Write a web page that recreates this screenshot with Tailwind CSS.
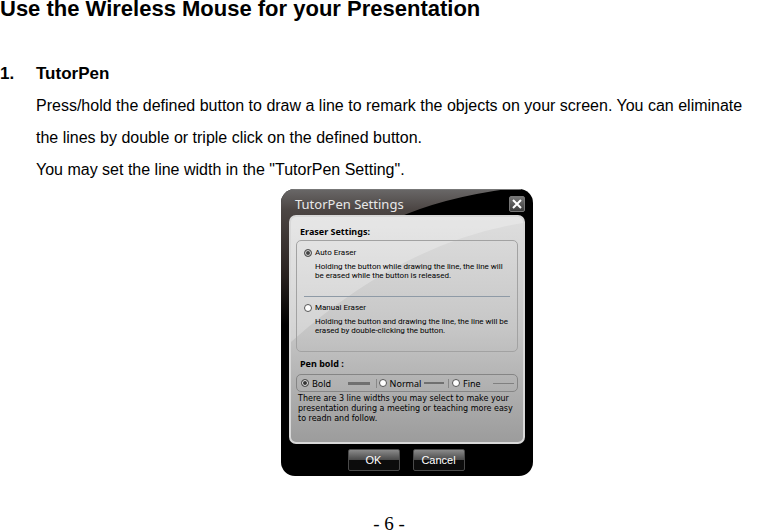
<!DOCTYPE html>
<html lang="en">
<head>
    <meta charset="UTF-8">
    <meta name="viewport" content="width=device-width, initial-scale=1.0">
    <title>Use the Wireless Mouse for your Presentation</title>
    <script src="https://cdn.jsdelivr.net/npm/@tailwindcss/browser@4"></script>
</head>
<body class="bg-white text-black font-['Liberation_Sans',Arial,sans-serif]">
    <main>
        <h1 class="text-[22px] leading-[18px] font-bold">Use the Wireless Mouse for your Presentation</h1>

        <h2 class="mt-10 flex text-[17px] leading-8 font-bold">
            <span class="w-9">1.</span>
            <span>TutorPen</span>
        </h2>

        <div class="pl-9 text-[16px] leading-8">
            <p>Press/hold the defined button to draw a line to remark the objects on your screen. You can eliminate<br>the lines by double or triple click on the defined button.</p>
            <p>You may set the line width in the "TutorPen Setting".</p>

            <!-- TutorPen settings dialog -->
            <form class="relative mx-auto mt-[3px] w-[252px] overflow-hidden rounded-[14px] bg-black px-2 pb-1 font-['Noto_Sans',sans-serif] leading-none">
                <svg class="absolute inset-0 h-full w-full" viewBox="0 0 252 287" preserveAspectRatio="none" aria-hidden="true">
                    <defs>
                        <linearGradient id="sheen" x1="0" y1="0" x2="0" y2="1">
                            <stop offset="0" stop-color="#6a6868"/>
                            <stop offset="0.12" stop-color="#4c4644"/>
                            <stop offset="0.5" stop-color="#2a2220"/>
                            <stop offset="0.8" stop-color="#000"/>
                        </linearGradient>
                    </defs>
                    <path d="M0 0H226Q160 9 114 30Q30 80 0 170Z" fill="url(#sheen)"/>
                    <path d="M0 0H240V1H0Z" fill="#777"/>
                </svg>

                <div class="relative flex h-[26px] items-center justify-between pl-[6px] pt-1">
                    <h3 class="text-[13px] leading-4 text-[#e8e8e8] whitespace-nowrap">TutorPen Settings</h3>
                    <button type="button" aria-label="Close" class="flex size-4 items-center justify-center rounded-[2px] border border-[#777] bg-linear-to-b from-[#777] to-[#3c3c3c]">
                        <svg class="size-3" viewBox="0 0 12 12" stroke="#fff" stroke-width="2" aria-hidden="true"><path d="M2 2L10 10M10 2L2 10"/></svg>
                    </button>
                </div>

                <div class="relative h-[229px] overflow-hidden rounded-[7px] border-2 border-[#d8d8d8] bg-linear-to-b from-[#dedede] via-[#c6c6c6] via-50% to-[#9c9c9c] px-[5px] text-black">
                    <svg class="absolute inset-0 h-full w-full" viewBox="0 0 232 225" preserveAspectRatio="none" aria-hidden="true">
                        <path d="M0 0H232V6Q110 26 0 125Z" fill="#fff" fill-opacity="0.25"/>
                    </svg>
                    <div class="relative">
                        <h4 class="pt-[9px] pl-1 text-[9px] leading-3 font-bold">Eraser Settings:</h4>
                        <fieldset class="mt-[2px] h-28 min-w-0 rounded-[5px] border border-[#a2a2a2] px-[7px] pt-[6px] font-[Roboto,sans-serif] text-[8px]">
                            <label class="flex items-center gap-[3px] leading-3">
                                <input type="radio" name="eraser" checked class="size-2 appearance-none rounded-full border border-[#555] bg-white checked:bg-[#444] checked:shadow-[inset_0_0_0_1px_#ddd]">
                                Auto Eraser
                            </label>
                            <p class="mt-[3px] pl-[11px] leading-[9px] whitespace-nowrap">Holding the button while drawing the line, the line will<br>be erased while the button is released.</p>
                            <hr class="mt-4 border-[#8e9aa6]">
                            <label class="mt-[5px] flex items-center gap-[3px] leading-3">
                                <input type="radio" name="eraser" class="size-2 appearance-none rounded-full border border-[#555] bg-white checked:bg-[#444] checked:shadow-[inset_0_0_0_1px_#ddd]">
                                Manual Eraser
                            </label>
                            <p class="mt-[3px] pl-[11px] leading-[9px] whitespace-nowrap">Holding the button and drawing the line, the line will be<br>erased by double-clicking the button.</p>
                        </fieldset>
                        <h4 class="mt-[6px] pl-1 text-[9px] leading-3 font-bold">Pen bold :</h4>
                        <fieldset class="mt-1 flex h-[18px] min-w-0 items-center rounded-[5px] border border-[#858585] pl-1 text-[9px]">
                            <label class="flex w-[75px] items-center gap-[3px]">
                                <input type="radio" name="pen" checked class="size-2 appearance-none rounded-full border border-[#555] bg-white checked:bg-[#333] checked:shadow-[inset_0_0_0_1px_#eee]">
                                Bold
                                <span class="mr-[6px] ml-auto h-[3px] w-[22px] bg-[#707070]"></span>
                            </label>
                            <label class="flex w-[72px] items-center gap-[3px] border-l border-[#888] pl-[2px]">
                                <input type="radio" name="pen" class="size-2 appearance-none rounded-full border border-[#555] bg-white checked:bg-[#333] checked:shadow-[inset_0_0_0_1px_#eee]">
                                Normal
                                <span class="mr-1 ml-auto h-[2px] w-[21px] bg-[#707070]"></span>
                            </label>
                            <label class="flex flex-1 items-center gap-[3px] border-l border-[#888] pl-[3px]">
                                <input type="radio" name="pen" class="size-2 appearance-none rounded-full border border-[#555] bg-white checked:bg-[#333] checked:shadow-[inset_0_0_0_1px_#eee]">
                                Fine
                                <span class="mr-[3px] ml-auto h-px w-[21px] bg-[#808080]"></span>
                            </label>
                        </fieldset>
                        <p class="mt-[2px] pl-[2px] font-['DejaVu_Sans',sans-serif] text-[8px] leading-[10px] whitespace-nowrap">There are 3 line widths you may select to make your<br>presentation during a meeting or teaching more easy<br>to readn and follow.</p>
                    </div>
                </div>

                <div class="relative mt-[5px] flex h-[23px] justify-center gap-[13px] pr-[2px] font-['Liberation_Sans',Arial,sans-serif] text-[11px] text-white">
                    <button type="button" class="h-[22px] w-[52px] rounded-[2px] border border-[#4a4a4a] bg-linear-to-b from-[#8a8a8a] from-0% via-[#4a4a4a] via-50% to-[#0c0c0c] to-52%">OK</button>
                    <button type="button" class="h-[22px] w-[52px] rounded-[2px] border border-[#4a4a4a] bg-linear-to-b from-[#8a8a8a] from-0% via-[#4a4a4a] via-50% to-[#0c0c0c] to-52%">Cancel</button>
                </div>
            </form>
        </div>
    </main>

    <footer class="mt-10 text-center font-['Liberation_Serif',serif] text-[19px] leading-4">- 6 -</footer>
</body>
</html>
